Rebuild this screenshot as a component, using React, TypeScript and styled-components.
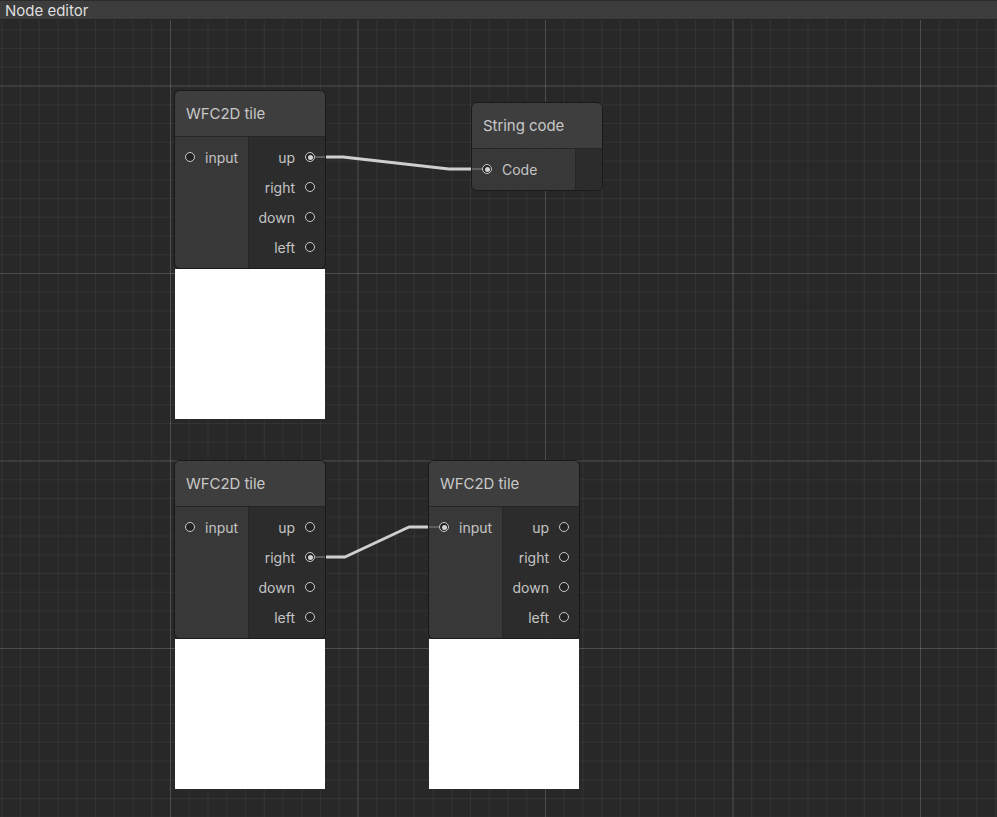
import React from "react";
import styled, { createGlobalStyle, css } from "styled-components";

const GlobalStyle = createGlobalStyle`
  html, body { margin: 0; padding: 0; background: #282828; }
  body { font-family: Inter, "Noto Sans", sans-serif; -webkit-font-smoothing: antialiased; }
  * { box-sizing: border-box; }
`;

const Window = styled.div`
  width: 997px;
  height: 817px;
  display: flex;
  flex-direction: column;
  overflow: hidden;
  background: #282828;
`;

const TitleBar = styled.div`
  height: 20px;
  flex: none;
  display: flex;
  align-items: center;
  padding-left: 5px;
  background: #3c3c3c;
  border-top: 1px solid #2c2c2c;
  border-bottom: 1px solid #232323;
  color: #dedede;
  font-size: 15px;
  line-height: 1;
`;

const Canvas = styled.div`
  position: relative;
  flex: 1;
  overflow: hidden;
  background-color: #282828;
  background-image:
    linear-gradient(to right, rgba(255, 255, 255, 0.13) 1px, transparent 1px),
    linear-gradient(to bottom, rgba(255, 255, 255, 0.13) 1px, transparent 1px),
    linear-gradient(to right, rgba(255, 255, 255, 0.05) 1px, transparent 1px),
    linear-gradient(to bottom, rgba(255, 255, 255, 0.05) 1px, transparent 1px);
  background-size: 187.5px 187.5px, 187.5px 187.5px, 18.75px 18.75px, 18.75px 18.75px;
  background-position: 170px 65.5px, 170px 65.5px, 170px 65.5px, 170px 65.5px;
`;

const NodeWrap = styled.div<{ $x: number; $y: number }>`
  position: absolute;
  left: ${(p) => p.$x}px;
  top: ${(p) => p.$y}px;
  display: flex;
  flex-direction: column;
`;

const NodeFrame = styled.div<{ $w: number }>`
  width: ${(p) => p.$w}px;
  border: 1px solid #191919;
  border-radius: 6px;
  overflow: hidden;
  display: flex;
  flex-direction: column;
`;

const NodeHeader = styled.div`
  height: 46px;
  display: flex;
  align-items: center;
  padding-left: 11px;
  background: rgba(63, 63, 63, 0.95);
  border-bottom: 1px solid #252525;
  color: #c8c8c8;
  font-size: 15px;
  letter-spacing: -0.05px;
`;

const NodeBody = styled.div`
  display: flex;
  flex-direction: row;
`;

const Column = styled.div<{ $side: "in" | "out"; $w?: number }>`
  display: flex;
  flex-direction: column;
  padding: 5px 0 6px;
  ${(p) =>
    p.$side === "in"
      ? css`
          width: ${p.$w}px;
          background: rgba(57, 57, 57, 0.94);
          border-right: 1px solid #262626;
        `
      : css`
          flex: 1;
          background: rgba(45, 45, 45, 0.94);
        `}
`;

const PortRow = styled.div<{ $side: "in" | "out" }>`
  height: 30px;
  display: flex;
  align-items: center;
  gap: 10px;
  color: #c4c4c4;
  font-size: 14px;
  ${(p) =>
    p.$side === "in"
      ? css`
          flex-direction: row;
          padding-left: 10px;
        `
      : css`
          flex-direction: row-reverse;
          padding-right: 10px;
        `}
`;

const PortDot = styled.span<{ $on?: boolean; $side: "in" | "out" }>`
  position: relative;
  width: 10px;
  height: 10px;
  flex: none;
  border-radius: 50%;
  border: 1px solid #c9c9c9;
  background: #232323;
  ${(p) =>
    p.$on &&
    css`
      &::before {
        content: "";
        position: absolute;
        left: 1.5px;
        top: 1.5px;
        width: 5px;
        height: 5px;
        border-radius: 50%;
        background: #d2d2d2;
      }
      &::after {
        content: "";
        position: absolute;
        top: 3px;
        height: 2px;
        width: 10px;
        background: #5e5e5e;
        ${p.$side === "out" ? "left: 9px;" : "right: 9px;"}
      }
    `}
`;

const Preview = styled.div`
  width: 150px;
  height: 150px;
  margin: 0 1px;
  background: #ffffff;
`;

const Wires = styled.svg`
  position: absolute;
  left: 0;
  top: 0;
  pointer-events: none;
`;

type Port = { name: string; on?: boolean };

function Node(props: {
  x: number;
  y: number;
  w: number;
  inW: number;
  title: string;
  inputs: Port[];
  outputs: Port[];
  preview?: boolean;
}) {
  return (
    <NodeWrap $x={props.x} $y={props.y}>
      <NodeFrame $w={props.w}>
        <NodeHeader>{props.title}</NodeHeader>
        <NodeBody>
          <Column $side="in" $w={props.inW}>
            {props.inputs.map((p) => (
              <PortRow key={p.name} $side="in">
                <PortDot $side="in" $on={p.on} />
                <span>{p.name}</span>
              </PortRow>
            ))}
          </Column>
          <Column $side="out">
            {props.outputs.map((p) => (
              <PortRow key={p.name} $side="out">
                <PortDot $side="out" $on={p.on} />
                <span>{p.name}</span>
              </PortRow>
            ))}
          </Column>
        </NodeBody>
      </NodeFrame>
      {props.preview && <Preview />}
    </NodeWrap>
  );
}

const dirs = (on?: string): Port[] =>
  ["up", "right", "down", "left"].map((n) => ({ name: n, on: n === on }));

export default function App() {
  return (
    <>
      <GlobalStyle />
      <Window>
        <TitleBar>Node editor</TitleBar>
        <Canvas>
          <Wires width="997" height="797" viewBox="0 0 997 797">
            <polyline
              points="325,137 343,137 449,149 471,149"
              fill="none"
              stroke="#cfcfcf"
              strokeWidth="3"
              strokeLinejoin="round"
            />
            <polyline
              points="325,537 345,537 409,507 429,507"
              fill="none"
              stroke="#cfcfcf"
              strokeWidth="3"
              strokeLinejoin="round"
            />
          </Wires>
          <Node
            x={174}
            y={70}
            w={152}
            inW={74}
            title="WFC2D tile"
            inputs={[{ name: "input" }]}
            outputs={dirs("up")}
            preview
          />
          <Node
            x={471}
            y={82}
            w={132}
            inW={104}
            title="String code"
            inputs={[{ name: "Code", on: true }]}
            outputs={[]}
          />
          <Node
            x={174}
            y={440}
            w={152}
            inW={74}
            title="WFC2D tile"
            inputs={[{ name: "input" }]}
            outputs={dirs("right")}
            preview
          />
          <Node
            x={428}
            y={440}
            w={152}
            inW={74}
            title="WFC2D tile"
            inputs={[{ name: "input", on: true }]}
            outputs={dirs()}
            preview
          />
        </Canvas>
      </Window>
    </>
  );
}
